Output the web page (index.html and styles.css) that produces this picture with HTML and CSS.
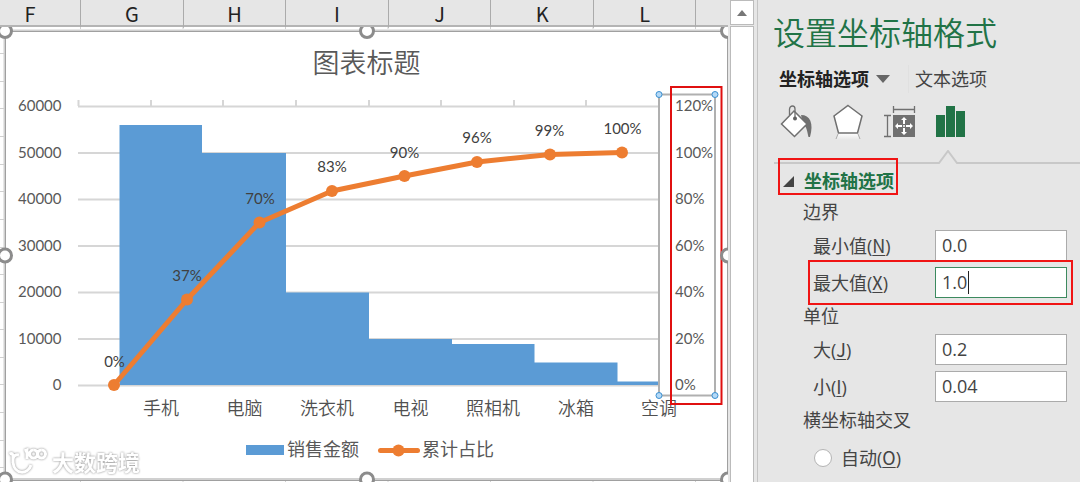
FILE: index.html
```html
<!DOCTYPE html>
<html lang="zh-CN">
<head>
<meta charset="utf-8">
<title>设置坐标轴格式</title>
<link rel="stylesheet" href="styles.css">
</head>
<body>
<div class="app">
  <main class="sheet">
    <div class="columns">
      <span class="col col-first">F</span><span class="col">G</span><span class="col">H</span><span class="col">I</span><span class="col">J</span><span class="col">K</span><span class="col">L</span><span class="col"></span>
    </div>
    <svg class="chart" viewBox="0 27 728 455" role="img" aria-label="图表标题">
      <!-- worksheet grid around the chart -->
      <path class="cell-line" d="M0 53.500H5M0 81.500H5M0 108.500H5M0 136.500H5M0 164.500H5M0 191.500H5M0 219.500H5M0 247.500H5M0 274.500H5M0 302.500H5M0 329.500H5M0 357.500H5M0 384.500H5M0 412.500H5M0 440.500H5M0 467.500H5M80.500 27V29M183 27V29M285.500 27V29M388 27V29M490.500 27V29M593 27V29M695.500 27V29M80.500 481V482M183 481V482M285.500 481V482M388 481V482M490.500 481V482M593 481V482M695.500 481V482"/>
      <!-- chart frame -->
      <rect class="frame-soft" x="4.500" y="30.500" width="725" height="448.500"/>
      <path class="frame-dark" d="M5.500 480.500V31.500H727.500V480.500Z"/>
      <text class="chart-title" x="366.500" y="73">图表标题</text>
      <!-- plot area -->
      <path class="grid-line" d="M78 106.500H659M78 153H659M78 199.500H659M78 246H659M78 292.500H659M78 339H659M78 385.500H659M78.500 100V106M151 100V106M223 100V106M296 100V106M369 100V106M441 100V106M514 100V106M586 100V106"/>
      <path class="area" d="M119.500 385V125H202V153H286V292.500H369V339H452V344H534.500V362.500H617.500V381.500H659V385Z"/>
      <g class="axis axis-left">
        <text x="61.500" y="111">60000</text><text x="61.500" y="158">50000</text><text x="61.500" y="204">40000</text><text x="61.500" y="251">30000</text><text x="61.500" y="297">20000</text><text x="61.500" y="344">10000</text><text x="61.500" y="390">0</text>
      </g>
      <g class="category">
        <text x="161" y="415">手机</text><text x="244.500" y="415">电脑</text><text x="327" y="415">洗衣机</text><text x="410.500" y="415">电视</text><text x="493" y="415">照相机</text><text x="576" y="415">冰箱</text><text x="659" y="415">空调</text>
      </g>
      <path class="trend" d="M114 385L187 299.500L259.500 222.500L332 191L404.500 176L477 162L550 154.500L622 152.500"/>
      <g class="marker">
        <circle cx="114" cy="385" r="6"/><circle cx="187" cy="299.500" r="6"/><circle cx="259.500" cy="222.500" r="6"/><circle cx="332" cy="191" r="6"/><circle cx="404.500" cy="176" r="6"/><circle cx="477" cy="162" r="6"/><circle cx="550" cy="154.500" r="6"/><circle cx="622" cy="152.500" r="6"/>
      </g>
      <g class="axis point-label">
        <text x="114.500" y="367">0%</text><text x="187" y="281">37%</text><text x="260" y="204">70%</text><text x="332" y="172">83%</text><text x="404.500" y="158">90%</text><text x="477" y="143">96%</text><text x="549.500" y="136">99%</text><text x="622.500" y="134">100%</text>
      </g>
      <!-- selected secondary axis -->
      <rect class="axis-box" x="659" y="94.500" width="56" height="301"/>
      <g class="axis">
        <text x="675" y="111">120%</text><text x="675" y="158">100%</text><text x="675" y="204">80%</text><text x="675" y="251">60%</text><text x="675" y="297">40%</text><text x="675" y="344">20%</text><text x="675" y="390">0%</text>
      </g>
      <rect class="callout-box" x="671" y="87" width="50.500" height="317"/>
      <g class="axis-handle">
        <circle cx="659" cy="94.500" r="3"/><circle cx="715" cy="94.500" r="3"/><circle cx="659" cy="395.500" r="3"/><circle cx="715" cy="395.500" r="3"/>
      </g>
      <!-- legend -->
      <rect class="area" x="246" y="445" width="38" height="10"/>
      <text class="legend" x="287" y="456">销售金额</text>
      <path class="trend" d="M380.500 450.500H417.500"/>
      <circle class="marker" cx="398.500" cy="450.500" r="6"/>
      <text class="legend" x="422" y="456">累计占比</text>
      <g class="frame-handle">
        <circle cx="5" cy="31" r="6.500"/><circle cx="367" cy="31" r="6.500"/><circle cx="728" cy="31" r="6.500"/><circle cx="5" cy="255.500" r="6.500"/><circle cx="728" cy="255.500" r="6.500"/><circle cx="5" cy="479.500" r="6.500"/><circle cx="367" cy="479.500" r="6.500"/><circle cx="728" cy="479.500" r="6.500"/>
      </g>
      <g class="watermark">
        <path class="mark" d="M9.500 454Q13 452 13 457V463M13 459Q14 454 19 455M13 462C14 475 28 475 31 465M24.500 451L27 450V459M33.500 450a4 4 0 1 0 .1 0M41.500 450a4 4 0 1 0 .1 0"/>
        <text x="52" y="471">大数跨境</text>
      </g>
    </svg>
  </main>
  <div class="scroll">
    <button class="scroll-up" aria-label="向上滚动"><svg viewBox="0 0 10 6"><path d="M0 6L5 0L10 6Z"/></svg></button>
    <div class="track"></div>
  </div>
  <aside class="pane">
    <h1 class="pane-title">设置坐标轴格式</h1>
    <div class="tabs">
      <button class="tab tab-on">坐标轴选项<svg class="caret" viewBox="0 0 14 8"><path d="M0 0H14L7 8Z"/></svg></button>
      <button class="tab">文本选项</button>
    </div>
    <div class="icons">
      <button class="icon" aria-label="填充与线条">
        <svg viewBox="0 0 36 36"><path d="M22 11C31 11 35 19 31 33L29.500 33C28 27 28 23 24 20Z" fill="#707070"/><path d="M15 7L28 20L15.500 32.500L2.500 20Z" fill="#fff" stroke="#707070" stroke-width="1.500"/><path d="M10.500 11V5Q11 2 13.500 2T16 5V14" fill="none" stroke="#707070" stroke-width="1.300"/><circle cx="16" cy="14.500" r="2" fill="#606060"/></svg>
      </button>
      <button class="icon" aria-label="效果">
        <svg viewBox="0 0 36 36"><defs><linearGradient id="fade" x2="0" y2="1"><stop offset="0" stop-color="#fff"/><stop offset="1" stop-color="#e6e6e6"/></linearGradient></defs><path d="M8 29H28L30 36H6Z" fill="url(#fade)"/><path d="M8 30L6 35M28 30L30 35" stroke="#aaa"/><path d="M18 1.500L32 12L27.500 29H8.500L4 12Z" fill="#fff" stroke="#707070" stroke-width="1.500"/></svg>
      </button>
      <button class="icon" aria-label="大小与属性">
        <svg viewBox="0 0 36 36"><rect x="12" y="11" width="22" height="22" fill="#707070"/><path d="M12.500 2V9M33.500 2V9M12.500 5.500H33.500M3 11.500H10M3 32.500H10M6.500 11.500V32.500" fill="none" stroke="#707070" stroke-width="1.300"/><path d="M23 13L26 16H24V20H22V16H20ZM23 31L20 28H22V24H24V28H26ZM14 22L17 19V21H21V23H17V25ZM32 22L29 25V23H25V21H29V19Z" fill="#fff"/><circle cx="23" cy="22" r="1" fill="#fff"/></svg>
      </button>
      <button class="icon" aria-label="坐标轴选项">
        <svg viewBox="0 0 36 36"><path d="M4 11H13V33H4ZM14 2H23V33H14ZM24 7H33V33H24Z" fill="#217346"/></svg>
      </button>
    </div>
    <div class="divider"><i class="rule rule-start"></i><svg class="notch" viewBox="0 0 20 14"><path d="M0 13H1L10 1L19 13H20"/></svg><i class="rule"></i></div>
    <button class="section marked"><svg class="twist" viewBox="0 0 11 11"><path d="M11 0V11H0Z"/></svg>坐标轴选项</button>
    <form class="options">
      <h2 class="group">边界</h2>
      <div class="row"><label for="min">最小值(<u>N</u>)</label><span class="box"><input id="min" value="0.0"></span></div>
      <div class="row row-marked marked"><label for="max">最大值(<u>X</u>)</label><span class="box box-active"><input id="max" value="1.0"></span></div>
      <h2 class="group">单位</h2>
      <div class="row"><label for="major">大(<u>J</u>)</label><span class="box"><input id="major" value="0.2"></span></div>
      <div class="row"><label for="minor">小(<u>I</u>)</label><span class="box"><input id="minor" value="0.04"></span></div>
      <h2 class="group">横坐标轴交叉</h2>
      <div class="choice"><input class="radio" type="radio" id="auto" name="cross"><label for="auto">自动(<u>O</u>)</label></div>
    </form>
  </aside>
</div>
</body>
</html>
```

FILE: styles.css
```css
* { box-sizing: border-box; }
body {
  margin: 0;
  background: #e6e6e6;
  color: #444;
  font: 18px/28px "Open Sans", "Noto Sans CJK SC", sans-serif;
}
button { border: 0; padding: 0; background: none; font: inherit; color: inherit; }
h1, h2 { margin: 0; font-weight: 400; }
.app { display: flex; min-height: 100vh; overflow: hidden; }

/* worksheet */
.sheet { flex: 1; min-width: 0; background: #fff; }
.columns {
  display: grid;
  grid-template-columns: 162fr repeat(6, 205fr) 63fr;
  height: 27px;
  background: #e6e6e6;
  border-bottom: 2px solid #b4b4b4;
  color: #222;
  font: 20px/28px "Noto Sans CJK SC", sans-serif;
  text-align: center;
}
.col { border-right: 1px solid #ababab; }
.col:last-child { border-right: 0; }
.col-first { padding-right: 20px; }

/* chart */
.chart { display: block; width: 100%; font-family: Lato, "Noto Sans CJK SC", sans-serif; }
.cell-line { stroke: #d0d0d0; }
.frame-soft { fill: #fff; stroke: #d0d0d0; stroke-width: 2; }
.frame-dark { fill: none; stroke: #a0a0a0; }
.chart-title { font: 350 27px "Noto Sans CJK SC", sans-serif; fill: #595959; text-anchor: middle; }
.grid-line { stroke: #d6d6d6; stroke-width: 2; }
.area { fill: #5b9bd5; }
.axis { font-size: 15px; fill: #595959; }
.axis-left { text-anchor: end; }
.category { font: 350 18px "Noto Sans CJK SC", sans-serif; fill: #505050; text-anchor: middle; }
.trend { fill: none; stroke: #ed7d31; stroke-width: 5; stroke-linecap: round; stroke-linejoin: round; }
.marker { fill: #ed7d31; }
.point-label { fill: #404040; text-anchor: middle; }
.axis-box { fill: none; stroke: #b0b0b0; stroke-width: 2; }
.callout-box { fill: none; stroke: #e01010; stroke-width: 2; }
.axis-handle { fill: #b4d9f7; stroke: #3a8fd0; stroke-width: 1; }
.legend { font-size: 18px; fill: #595959; }
.frame-handle { fill: #fff; stroke: #8c8c8c; stroke-width: 3; }
.watermark { font-size: 22px; font-weight: 700; filter: drop-shadow(0 0 1px #888); fill: #fff; }
.mark { fill: none; stroke: #fff; stroke-width: 3; }

/* scrollbar */
.scroll {
  display: flex;
  flex-direction: column;
  flex: 0 0 30px;
  padding: 0 3px 0 2px;
  border-right: 1px solid #c4c4c4;
}
.scroll-up {
  display: flex;
  align-items: center;
  justify-content: center;
  height: 25px;
  background: #fff;
  border: 1px solid #bbb;
}
.scroll-up svg { width: 10px; fill: #777; }
.track { flex: 1; margin-top: 1px; background: #fff; border: 1px solid #bbb; border-bottom: 0; }

/* format pane */
.pane { flex: 0 0 322px; padding: 9px 0 8px 16px; }
.pane-title { color: #217346; font: 350 32px/44px "Noto Sans CJK SC", sans-serif; margin-left: -1px; }
.tabs { display: flex; margin-top: 12px; padding-left: 5px; }
.tab { display: flex; align-items: center; }
.tab-on { color: #222; font-weight: 700; padding-right: 18px; margin-right: 6px; border-right: 1px solid #e0e0e0; }
.caret { width: 14px; margin-left: 7px; fill: #666; }
.icons { display: flex; gap: 15px; margin-top: 11px; padding-left: 5px; height: 40px; }
.icon { width: 36px; height: 36px; }
.icon svg { display: block; }
.divider { display: flex; height: 14px; margin-top: 6px; align-items: flex-end; }
.rule { flex: 1; height: 2px; background: #c8c8c8; }
.rule-start { flex: 0 0 164px; }
.notch { width: 20px; fill: none; stroke: #c8c8c8; stroke-width: 2; }
.marked { border: 2px solid #f01414; }
.section {
  display: flex;
  align-items: center;
  gap: 10px;
  position: relative;
  height: 37px;
  margin: -6px 0 0 4px;
  padding: 9px 2px 0 3px;
  color: #217346;
  font-weight: 700;
}
.twist { width: 11px; fill: #444; }
.options { padding: 3px 13px 0 29px; }
.group { font-size: 18px; line-height: 28px; margin-bottom: 4px; }
.row { display: flex; justify-content: space-between; padding-left: 10px; margin-bottom: 6px; line-height: 30px; }
.row + .group { margin-top: -2px; }
.row-marked { position: relative; margin: -7px -6px -3px 5px; padding: 5px 4px 5px 3px; }
.box { position: relative; flex: 0 0 132px; height: 31px; border: 1px solid #ababab; background: #fff; }
.box input {
  display: block;
  width: 100%;
  height: 100%;
  padding: 0 6px 2px;
  border: 0;
  outline: 0;
  background: none;
  font: inherit;
  color: inherit;
}
.box-active { border-color: #3c8a5f; }
.box-active::after { content: ""; position: absolute; left: 32px; top: 3px; width: 1px; height: 23px; background: #222; }
u { font-family: "Noto Sans CJK SC", sans-serif; text-underline-offset: 2px; text-decoration-thickness: 1px; }
.choice { display: flex; align-items: center; gap: 9px; padding: 5px 0 0 11px; }
.radio { appearance: none; width: 18px; height: 18px; margin: 0; border: 1px solid #b4b4b4; border-radius: 50%; background: #fff; }
```
